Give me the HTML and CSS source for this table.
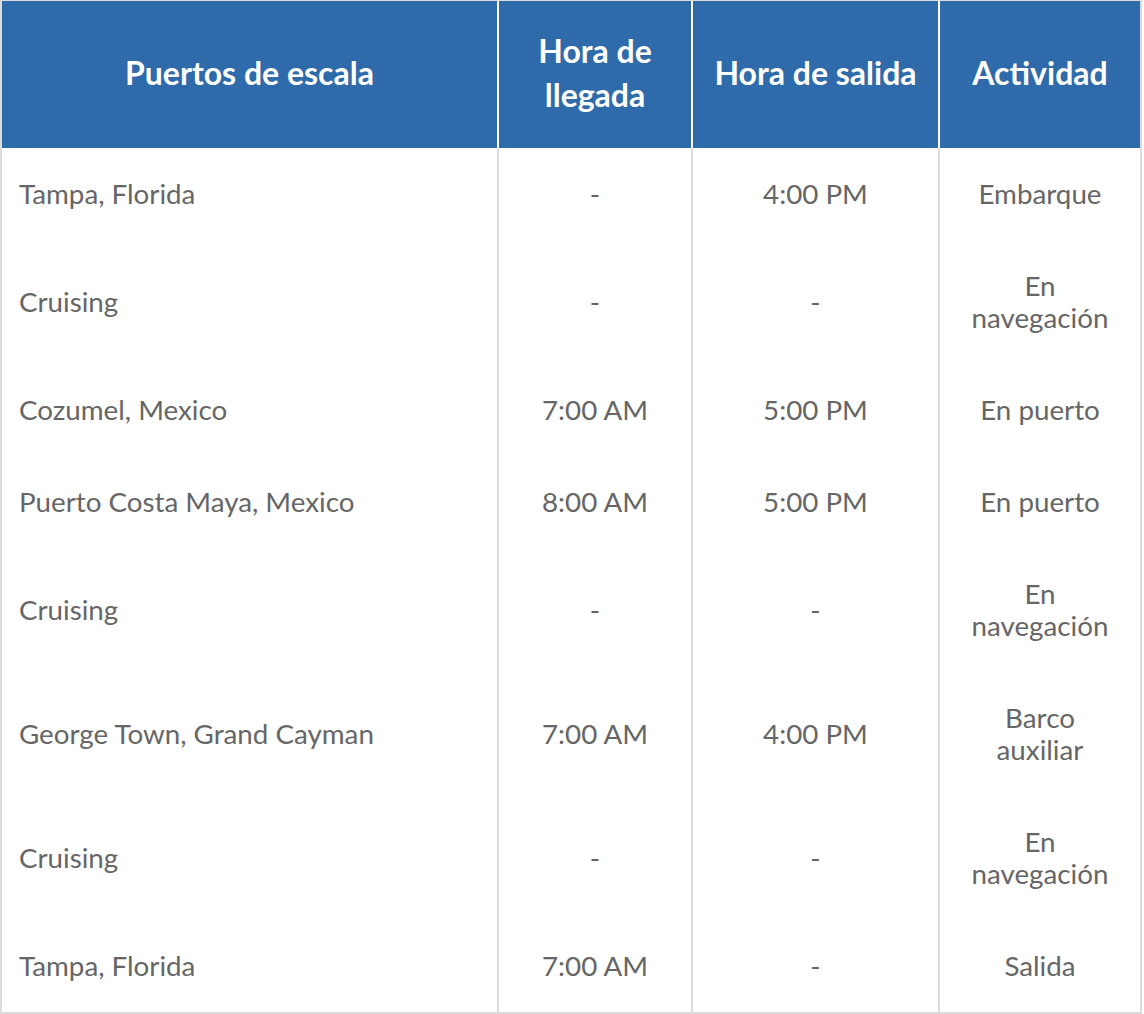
FILE: index.html
```html
<!DOCTYPE html>
<html lang="es">
<head>
<meta charset="utf-8">
<link rel="stylesheet" href="styles.css">
</head>
<body>
<table class="itinerary">
  <colgroup>
    <col class="c1"><col class="c2"><col class="c3"><col class="c4">
  </colgroup>
  <thead>
    <tr>
      <th>Puertos de escala</th>
      <th>Hora de<br>llegada</th>
      <th>Hora de salida</th>
      <th>Actividad</th>
    </tr>
  </thead>
  <tbody>
    <tr><td>Tampa, Florida</td><td>-</td><td>4:00 PM</td><td>Embarque</td></tr>
    <tr><td>Cruising</td><td>-</td><td>-</td><td>En<br>navegación</td></tr>
    <tr><td>Cozumel, Mexico</td><td>7:00 AM</td><td>5:00 PM</td><td>En puerto</td></tr>
    <tr><td>Puerto Costa Maya, Mexico</td><td>8:00 AM</td><td>5:00 PM</td><td>En puerto</td></tr>
    <tr><td>Cruising</td><td>-</td><td>-</td><td>En<br>navegación</td></tr>
    <tr><td>George Town, Grand Cayman</td><td>7:00 AM</td><td>4:00 PM</td><td>Barco<br>auxiliar</td></tr>
    <tr><td>Cruising</td><td>-</td><td>-</td><td>En<br>navegación</td></tr>
    <tr><td>Tampa, Florida</td><td>7:00 AM</td><td>-</td><td>Salida</td></tr>
  </tbody>
</table>
</body>
</html>
```

FILE: styles.css
```css
html, body {
  margin: 0;
  padding: 0;
  background: #fff;
}
.itinerary {
  border-collapse: separate;
  border-spacing: 0;
  width: 1142px;
  table-layout: fixed;
  font-family: Lato, "Open Sans", sans-serif;
  border-top: 1px solid #dcdcdc;
  border-left: 2px solid #dcdcdc;
  border-bottom: 2px solid #dcdcdc;
}
.c1 { width: 497px; }
.c2 { width: 194px; }
.c3 { width: 247px; }
.c4 { width: 202px; }
.itinerary th {
  background: #2f6aaa;
  color: #fff;
  font-weight: 700;
  font-size: 32px;
  line-height: 44px;
  height: 147px;
  padding: 0 4px 4px;
  box-sizing: border-box;
  text-align: center;
  vertical-align: middle;
  border-right: 2px solid #fff;
}
.itinerary th:first-child {
  padding-left: 0;
  padding-right: 0;
}
.itinerary th:last-child {
  border-right: 2px solid #dcdcdc;
}
.itinerary td {
  font-size: 27.75px;
  line-height: 32px;
  color: #666;
  padding: 30px 4px;
  text-align: center;
  vertical-align: middle;
  border-right: 2px solid #dcdcdc;
}
.itinerary td:first-child {
  text-align: left;
  padding-left: 17px;
}
```
